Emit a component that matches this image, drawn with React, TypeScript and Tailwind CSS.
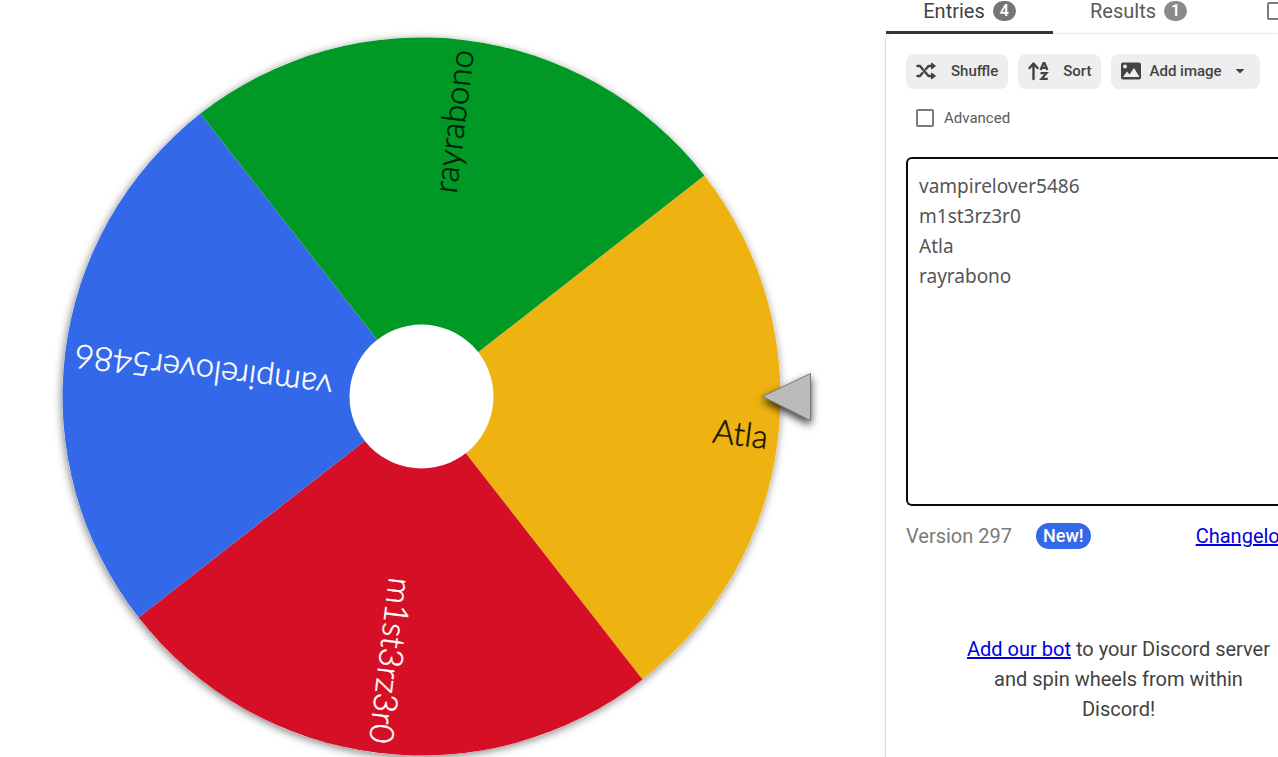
import { useState } from "react";

const slices = [
  { name: "Atla", angle: 7, fill: "#eeb211", ink: "#1c1500" },
  { name: "m1st3rz3r0", angle: 97, fill: "#d50f25", ink: "#ffffff" },
  { name: "vampirelover5486", angle: 187, fill: "#3369e8", ink: "#ffffff" },
  { name: "rayrabono", angle: 277, fill: "#009925", ink: "#001c06" },
];

const RADIUS = 359;

function wedge(angle: number) {
  const at = (deg: number) => {
    const r = (deg * Math.PI) / 180;
    return `${RADIUS * Math.cos(r)} ${RADIUS * Math.sin(r)}`;
  };
  return `M0 0L${at(angle - 45)}A${RADIUS} ${RADIUS} 0 0 1 ${at(angle + 45)}Z`;
}

function Wheel() {
  return (
    <svg
      viewBox="-421.5 -396.5 885 772"
      className="block w-full overflow-visible"
      role="img"
      aria-label="Wheel of names"
    >
      <defs>
        <filter id="wheelShadow" x="-10%" y="-10%" width="120%" height="120%">
          <feDropShadow dx="-1" dy="2" stdDeviation="4" floodColor="#000" floodOpacity="0.5" />
        </filter>
        <filter id="pointerShadow" x="-40%" y="-40%" width="180%" height="180%">
          <feDropShadow dx="0" dy="4" stdDeviation="4" floodColor="#000" floodOpacity="0.8" />
        </filter>
      </defs>
      <circle r={RADIUS} fill="#fff" filter="url(#wheelShadow)" />
      {slices.map((s) => (
        <path key={s.name} d={wedge(s.angle)} fill={s.fill} />
      ))}
      {slices.map((s) => (
        <text
          key={s.name}
          x="349"
          y="0"
          dy="10"
          textAnchor="end"
          transform={`rotate(${s.angle})`}
          fill={s.ink}
          stroke={s.ink}
          strokeWidth="0.5"
          className="font-[Lato,sans-serif] text-[33px] font-light"
        >
          {s.name}
        </text>
      ))}
      <circle r="72" fill="#fff" />
      <path
        d="M341 0L389 -23V24Z"
        fill="#bbb"
        stroke="#777"
        strokeWidth="1"
        filter="url(#pointerShadow)"
      />
    </svg>
  );
}

function ShuffleIcon() {
  return (
    <svg viewBox="0 0 24 24" className="size-6" fill="currentColor" aria-hidden="true">
      <path
        d="M3.500 7H6L14.500 17H18M3.500 17H6L8.500 14M12 10L14.500 7H18"
        fill="none"
        stroke="currentColor"
        strokeWidth="2.4"
        strokeLinecap="round"
        strokeLinejoin="round"
      />
      <path
        d="M17.500 4L21.500 7L17.500 10ZM17.500 14L21.500 17L17.500 20Z"
        stroke="currentColor"
        strokeLinejoin="round"
      />
    </svg>
  );
}

function SortIcon() {
  return (
    <svg viewBox="0 0 24 24" className="size-6" fill="none" stroke="currentColor" aria-hidden="true">
      <path
        d="M7.500 20V5M3.500 9L7.500 4.500L11.500 9"
        strokeWidth="2.4"
        strokeLinecap="round"
        strokeLinejoin="round"
      />
      <path
        d="M14.500 11L17.500 4.200H18.500L21.500 11M15.500 8.800H20.500M14.500 14.200H20.500L15.500 19.800H21.800"
        strokeWidth="2.200"
      />
    </svg>
  );
}

function ImageIcon() {
  return (
    <svg viewBox="0 0 24 24" className="size-6" fill="currentColor" aria-hidden="true">
      <path
        fillRule="evenodd"
        d="M4 3.500H20A2 2 0 0 1 22 5.500V18.500A2 2 0 0 1 20 20.500H4A2 2 0 0 1 2 18.500V5.500A2 2 0 0 1 4 3.500ZM4 18H20.500L15 9L10.500 15.500L8 12.500ZM6 5.500A2 2 0 1 0 6 9.500A2 2 0 0 0 6 5.500Z"
      />
    </svg>
  );
}

const buttonStyle =
  "flex h-[35px] items-center rounded-lg bg-[#eeeeee] pb-px pl-2 text-[15px] font-medium text-[#434343]";
const badgeStyle =
  "flex h-5 w-[23px] items-center justify-center rounded-full text-base font-semibold text-white";
const boxStyle = "size-[18px] shrink-0 appearance-none rounded-xs border-2 border-[#7a7a7a]";

export default function App() {
  const [entries, setEntries] = useState("vampirelover5486\nm1st3rz3r0\nAtla\nrayrabono");

  return (
    <div className="flex h-screen overflow-hidden bg-white font-['Roboto',sans-serif] text-[20px] leading-[30px] text-[#424242]">
      <main className="min-w-0 flex-1">
        <Wheel />
      </main>
      <aside className="flex w-[393px] shrink-0 flex-col">
        <nav className="flex h-[34px] shrink-0 pl-px whitespace-nowrap" role="tablist">
          <button
            role="tab"
            aria-selected="true"
            className="flex w-[167px] shrink-0 items-start justify-center gap-2 border-b-3 border-[#363636] text-[20px] leading-[22px]"
          >
            Entries <span className={`${badgeStyle} mt-px bg-[#757575]`}>4</span>
          </button>
          <button
            role="tab"
            aria-selected="false"
            className="flex w-[171px] shrink-0 items-start justify-center gap-2 border-b border-[#eeeeee] text-[20px] leading-[22px] text-[#5a5a5a]"
          >
            Results <span className={`${badgeStyle} mt-px bg-[#8a8a8a]`}>1</span>
          </button>
          <label className="flex flex-1 items-start border-b border-[#eeeeee] pt-[2px] pl-[43px]">
            <input type="checkbox" aria-label="Hide" className={boxStyle} />
          </label>
        </nav>
        <section className="flex flex-1 flex-col rounded-tl-lg border-l border-[#dddddd] pt-5 pl-5 shadow-sm">
          <div className="flex gap-[10px] whitespace-nowrap">
            <button className={`${buttonStyle} gap-[13px] pr-[10px]`}>
              <ShuffleIcon />
              Shuffle
            </button>
            <button className={`${buttonStyle} gap-[13px] pr-[10px]`}>
              <SortIcon />
              Sort
            </button>
            <button className={`${buttonStyle} gap-[6px] pr-2`}>
              <ImageIcon />
              Add image
              <svg viewBox="0 0 24 24" className="size-6" fill="currentColor" aria-hidden="true">
                <path d="M7.500 10H16.500L12 14.500Z" />
              </svg>
            </button>
          </div>
          <label className="mt-[14px] flex items-center gap-[10px] pl-[10px] text-[15px] leading-[30px] text-[#5a5a5a]">
            <input type="checkbox" className={boxStyle} />
            Advanced
          </label>
          <textarea
            aria-label="Entries"
            value={entries}
            onChange={(e) => setEntries(e.target.value)}
            className="mt-6 h-[349px] w-full resize-none rounded-l-md border-2 border-r-0 border-[#0a0a0a] px-[11px] py-3 font-['Noto_Sans',sans-serif] text-[19px] leading-[30px] text-[#555555] outline-none"
          />
          <div className="mt-[15px] flex items-center whitespace-nowrap">
            <span className="text-[#7a7a7a]">Version 297</span>
            <span className="ml-6 flex h-[26px] items-center rounded-full bg-[#3369e8] px-[7px] text-lg font-medium text-white">
              New!
            </span>
            <a href="#changelog" className="ml-auto -mr-[13px] text-[#0000dd] underline">
              Changelog
            </a>
          </div>
          <p className="mt-[83px] -mr-[53px] px-15 text-center">
            <a href="#bot" className="text-[#0000dd] underline">
              Add our bot
            </a>{" "}
            to your Discord server and spin wheels from within Discord!
          </p>
        </section>
      </aside>
    </div>
  );
}
